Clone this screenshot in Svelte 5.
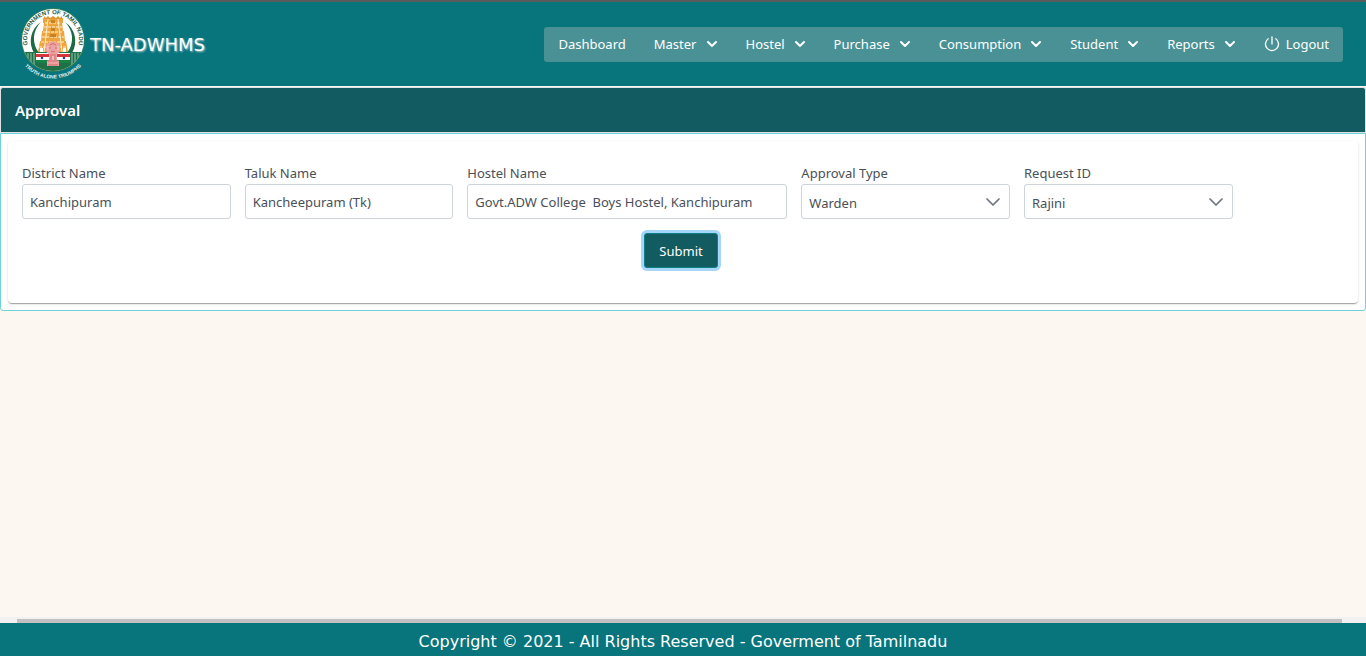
<script>
  const menu = ['Master', 'Hostel', 'Purchase', 'Consumption', 'Student', 'Reports'];
  let approvalType = $state('Warden');
  let requestId = $state('Rajini');
  let district = $state('Kanchipuram');
  let taluk = $state('Kancheepuram (Tk)');
  let hostel = $state('Govt.ADW College  Boys Hostel, Kanchipuram');
</script>

<div class="page">
  <header class="topbar">
    <div class="brand">
      <svg class="logo" width="72" height="76" viewBox="0 0 72 76" role="img" aria-label="Government of Tamil Nadu emblem">
        <defs>
          <path id="arc-top" d="M11.6 43 A26 26 0 1 1 60.4 43" />
          <path id="arc-bottom" d="M6.5 58.5 A38 38 0 0 0 65.5 58.5" />
          <clipPath id="disc"><circle cx="36" cy="34" r="31" /></clipPath>
        </defs>
        <circle cx="36" cy="34" r="32" fill="#2f7f5a" />
        <circle cx="36" cy="34" r="31" fill="#fff" />
        <path d="M24 16A23 23 0 0 0 17 47h5A23 23 0 0 1 24 16zM48 16A23 23 0 0 1 55 47h-5A23 23 0 0 0 48 16z" fill="#1c6b44" />
        <g clip-path="url(#disc)">
          <rect x="4" y="46" width="64" height="21" fill="#1f7046" />
          <path d="M8 47v7M11 47v11M14 47v13M17 47v14M55 47v14M58 47v13M61 47v11M64 47v7" stroke="#9cc4ad" stroke-width="1" />
        </g>
        <path d="M26 12h20v5h-1l1 8h1l1 10h1l2 11H21l2-11h1l1-10h1l1-8h-1z" fill="#eda43c" />
        <path d="M27 13v-3l2 2 2-2 2 2 3-2 3 2 2-2 2 2 2-2v3z" fill="#df952a" />
        <path d="M28 17h16M27 21h18M26 26h20M25 31h22M24 36h24M22 41h28" stroke="#fff1cf" stroke-width="1" stroke-dasharray="3 1" />
        <path d="M31 13l-4 33M41 13l4 33" stroke="#fff1cf" stroke-width="1" />
        <path d="M34 14h4v3h-4zM34 22h4v3h-4zM33 28h6v3h-6z" fill="#c98222" />
        <path d="M23 42h3v4h-3zM46 42h3v4h-3z" fill="#fff" />
        <rect x="19" y="47" width="34" height="10" fill="#fff" />
        <rect x="19" y="48" width="34" height="3" fill="#d8343b" />
        <rect x="19" y="54" width="34" height="3" fill="#17834a" />
        <circle cx="25" cy="52" r="1.3" fill="#28418c" />
        <circle cx="47" cy="52" r="1.3" fill="#28418c" />
        <path d="M32 37q1-2 4-2t4 2q3 0 3 3v5q-1 2-3 3v6l2 1v5H30v-5l2-1v-6q-2-1-3-3v-5q0-3 3-3z" fill="#eda2a2" />
        <path d="M33 39q3-3 6 0M31 42h3M38 42h3M34 45q2 2 4 0M33 49h6M31 55h10M31 59h10M34 50v4M38 50v4" fill="none" stroke="#cf6a70" stroke-width="1" />
        <path d="M31 40v4M41 40v4M36 50v4" stroke="#f8d6d3" stroke-width="1" />
        <text class="motto-top"><textPath href="#arc-top" startOffset="50%">GOVERNMENT OF TAMIL NADU</textPath></text>
        <text class="motto-bottom"><textPath href="#arc-bottom" startOffset="50%">TRUTH ALONE TRIUMPHS</textPath></text>
      </svg>
      <span class="brand-name">TN-ADWHMS</span>
    </div>

    <nav class="menubar" aria-label="Main">
      <button type="button" class="item">Dashboard</button>
      {#each menu as label}
        <button type="button" class="item">
          {label}
          <svg width="12" height="12" viewBox="0 0 12 12" aria-hidden="true"><path d="M2 4l4 4 4-4" fill="none" stroke="#fff" stroke-width="2" stroke-linecap="round" stroke-linejoin="round" /></svg>
        </button>
      {/each}
      <button type="button" class="item logout">
        <svg width="16" height="16" viewBox="0 0 16 16" aria-hidden="true"><path d="M8 1v7M4.2 2.8a6.5 6.5 0 1 0 7.6 0" fill="none" stroke="#fff" stroke-width="1.3" stroke-linecap="round" /></svg>
        Logout
      </button>
    </nav>
  </header>

  <main>
    <section class="panel">
      <h1 class="panel-title">Approval</h1>
      <div class="panel-body">
        <form class="card" onsubmit={(e) => e.preventDefault()}>
          <div class="fields">
            <div class="field">
              <label for="district">District Name</label>
              <input id="district" type="text" bind:value={district} />
            </div>
            <div class="field">
              <label for="taluk">Taluk Name</label>
              <input id="taluk" type="text" bind:value={taluk} />
            </div>
            <div class="field wide">
              <label for="hostel">Hostel Name</label>
              <input id="hostel" type="text" bind:value={hostel} />
            </div>
            <div class="field">
              <label for="approval">Approval Type</label>
              <div class="dropdown">
                <select id="approval" bind:value={approvalType}><option>Warden</option></select>
                <svg width="14" height="14" viewBox="0 0 14 14" aria-hidden="true"><path d="M1 4l6 6 6-6" /></svg>
              </div>
            </div>
            <div class="field">
              <label for="request">Request ID</label>
              <div class="dropdown">
                <select id="request" bind:value={requestId}><option>Rajini</option></select>
                <svg width="14" height="14" viewBox="0 0 14 14" aria-hidden="true"><path d="M1 4l6 6 6-6" /></svg>
              </div>
            </div>
          </div>
          <div class="actions"><button type="submit" class="submit">Submit</button></div>
        </form>
      </div>
    </section>
  </main>

  <div class="scroll-track" aria-hidden="true"><div class="thumb"></div></div>
  <footer>Copyright © 2021 - All Rights Reserved - Goverment of Tamilnadu</footer>
</div>

<style>
  :global(body) {
    margin: 0;
    background: #fcf7f0;
  }
  .page {
    min-height: 100vh;
    display: flex;
    flex-direction: column;
    font-family: 'Noto Sans', 'Open Sans', sans-serif;
    font-size: 13px;
    color: #495057;
  }
  .page * {
    box-sizing: border-box;
  }
  button,
  input,
  select {
    font: inherit;
    color: inherit;
    margin: 0;
  }
  .topbar {
    display: flex;
    align-items: center;
    justify-content: space-between;
    height: 86px;
    padding: 0 23px 0 17px;
    border-top: 2px solid #5b5b5b;
    background: #08747c;
  }
  .brand {
    display: flex;
    align-items: center;
    gap: 1px;
  }
  .logo {
    display: block;
  }
  .motto-top,
  .motto-bottom {
    font-family: 'Liberation Sans', sans-serif;
    font-weight: 700;
    text-anchor: middle;
  }
  .motto-top {
    font-size: 6px;
    fill: #1f5a42;
  }
  .motto-bottom {
    font-size: 5px;
    fill: #e6f2f0;
  }
  .brand-name {
    font-family: 'DejaVu Sans', Verdana, sans-serif;
    font-size: 18px;
    color: #fff;
    text-shadow: 1px 1px 2px #b9cfd0;
  }
  .menubar {
    display: flex;
    height: 35px;
    border-radius: 3px;
    background: #4a9195;
  }
  .item {
    display: flex;
    align-items: center;
    gap: 9px;
    padding: 0 14px;
    border: 0;
    background: none;
    color: #fff;
    white-space: nowrap;
  }
  .logout {
    gap: 6px;
  }
  main {
    flex: 1;
    padding-top: 1px;
  }
  .panel-title {
    margin: 0;
    padding: 11px 14px;
    border: 1px solid #dee2e6;
    border-radius: 3px 3px 0 0;
    background: #125b60;
    color: #fff;
    font-size: 15px;
    font-weight: 600;
    line-height: 22px;
  }
  .panel-body {
    padding: 7px;
    border: 1px solid #6ed3d8;
    border-radius: 0 0 3px 3px;
    background: #fff;
  }
  .card {
    padding: 23px 14px 35px;
    border-radius: 4px;
    background: #fff;
    box-shadow:
      0 2px 1px -1px rgba(0, 0, 0, 0.2),
      0 1px 1px 0 rgba(0, 0, 0, 0.14),
      0 1px 3px 0 rgba(0, 0, 0, 0.12);
  }
  .fields {
    display: grid;
    grid-template-columns: repeat(12, minmax(0, 1fr));
    gap: 14px;
  }
  .field {
    grid-column: span 2;
    display: flex;
    flex-direction: column;
    gap: 2px;
  }
  .wide {
    grid-column: span 3;
  }
  label {
    line-height: 18px;
  }
  input,
  select {
    width: 100%;
    height: 35px;
    padding: 0 7px;
    border: 1px solid #ced4da;
    border-radius: 3px;
    background: #fff;
    outline: 0;
  }
  select {
    display: block;
    appearance: none;
    padding-top: 2px;
    padding-right: 32px;
  }
  .dropdown {
    display: grid;
    align-items: center;
  }
  .dropdown > * {
    grid-area: 1 / 1;
  }
  .dropdown svg {
    justify-self: end;
    margin-right: 10px;
    pointer-events: none;
    fill: none;
    stroke: #6c757d;
    stroke-width: 1.7;
    stroke-linecap: round;
    stroke-linejoin: round;
  }
  .actions {
    display: flex;
    justify-content: center;
    padding: 14px 4px 0 0;
  }
  .submit {
    height: 35px;
    padding: 0 14px;
    border: 1px solid #108088;
    border-radius: 3px;
    background: #125b60;
    color: #fff;
    box-shadow: 0 0 0 3px #a6d5fa;
  }
  .scroll-track {
    height: 6px;
    padding: 2px 24px 0 17px;
    background: #f1f1f1;
  }
  .thumb {
    height: 4px;
    background: #c1c1c1;
  }
  footer {
    height: 33px;
    padding-top: 2px;
    background: #08747c;
    color: #fff;
    font-family: 'DejaVu Sans', Verdana, sans-serif;
    font-size: 16px;
    line-height: 34px;
    text-align: center;
  }
</style>
